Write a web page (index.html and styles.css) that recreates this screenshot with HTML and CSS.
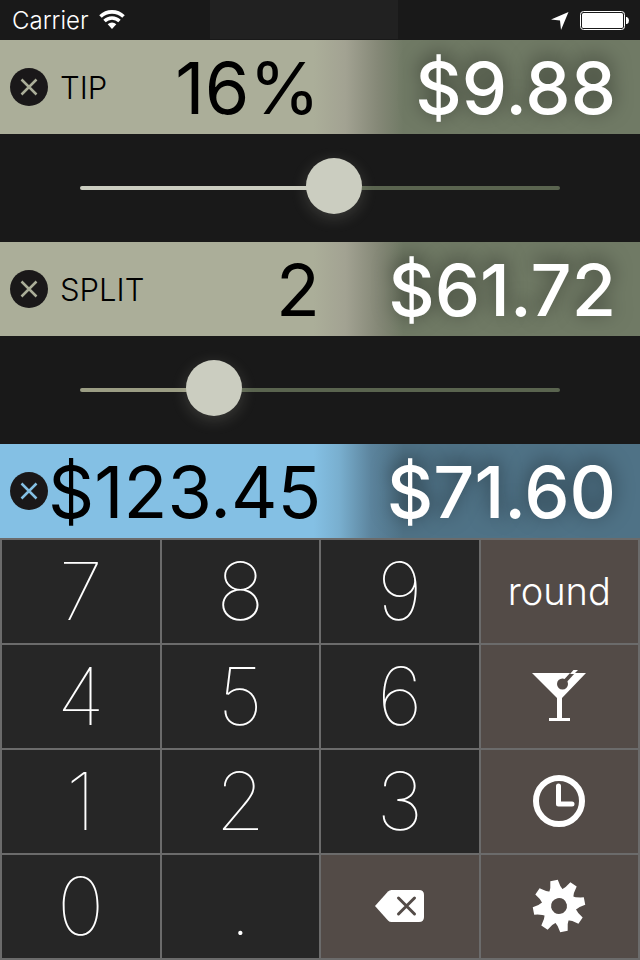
FILE: index.html
```
<!DOCTYPE html>
<html lang="en">
<head>
<meta charset="utf-8">
<meta name="viewport" content="width=device-width, initial-scale=1">
<title>Tip Calculator</title>
<link rel="stylesheet" href="styles.css">
</head>
<body>

<header class="status">
	<div class="carrier">
		<span>Carrier</span>
		<svg width="26" height="20" viewBox="0 0 26 20">
			<path d="M1.5 6.500 A16.500 16.500 0 0 1 24.500 6.500" fill="none" stroke="#fff" stroke-width="3.600"/>
			<path d="M5.500 11 A10.700 10.700 0 0 1 20.500 11" fill="none" stroke="#fff" stroke-width="3.400"/>
			<path d="M8.700 14.200 A6.200 6.200 0 0 1 17.300 14.200 L13 19 Z" fill="#fff"/>
		</svg>
	</div>
	<div class="notch"></div>
	<div class="indicators">
		<svg width="20" height="20" viewBox="0 0 20 20">
			<path d="M18.500 2 L11 20 L10 10.500 L1 9.500 Z" fill="#fff"/>
		</svg>
		<svg width="50" height="20" viewBox="0 0 50 20">
			<rect x="0.500" y="1.500" width="44" height="18" rx="3" fill="none" stroke="#fff"/>
			<rect x="2" y="3" width="41" height="15" rx="1.500" fill="#fff"/>
			<path d="M46 7 h1 q2 1 2 3.500 t-2 3.500 h-1 Z" fill="#fff"/>
		</svg>
	</div>
</header>

<main>
	<section class="row">
		<div class="entry">
			<button class="clear" aria-label="Clear tip"><svg width="38" height="38" viewBox="0 0 38 38"><path d="M11.500 11.500 L26.500 26.500 M26.500 11.500 L11.500 26.500"/></svg></button>
			<label for="tip">TIP</label>
			<output id="tipValue" class="value">16%</output>
		</div>
		<output class="total">$9.88</output>
	</section>
	<div class="slider">
		<input type="range" id="tip" class="bright" min="0" max="30" value="16" style="--fill: 53%">
	</div>

	<section class="row">
		<div class="entry">
			<button class="clear" aria-label="Clear split"><svg width="38" height="38" viewBox="0 0 38 38"><path d="M11.500 11.500 L26.500 26.500 M26.500 11.500 L11.500 26.500"/></svg></button>
			<label for="split">SPLIT</label>
			<output id="splitValue" class="value">2</output>
		</div>
		<output class="total">$61.72</output>
	</section>
	<div class="slider">
		<input type="range" id="split" min="1" max="5" value="2" style="--fill: 25%">
	</div>

	<section class="row active">
		<div class="entry">
			<button class="clear" aria-label="Clear bill"><svg width="38" height="38" viewBox="0 0 38 38"><path d="M11.500 11.500 L26.500 26.500 M26.500 11.500 L11.500 26.500"/></svg></button>
			<output class="value">$123.45</output>
		</div>
		<output class="total">$71.60</output>
	</section>
</main>

<div class="keypad">
	<button>7</button>
	<button>8</button>
	<button>9</button>
	<button class="tool round">round</button>

	<button>4</button>
	<button>5</button>
	<button>6</button>
	<button class="tool" aria-label="Drinks">
		<svg width="56" height="56" viewBox="0 0 56 56">
			<path d="M1 5 H55 L31 30 V50 H39 V53 H18 V50 H26 V30 Z" fill="#fff"/>
			<path d="M31.500 16 L42 4.500" stroke="#534b47" stroke-width="3.600"/>
			<circle cx="31.500" cy="16" r="5.500" fill="#534b47"/>
			<path d="M39 6 L42.500 2 H47 L43 6 Z" fill="#fff"/>
		</svg>
	</button>

	<button>1</button>
	<button>2</button>
	<button>3</button>
	<button class="tool" aria-label="History">
		<svg width="56" height="56" viewBox="0 0 56 56">
			<circle cx="28" cy="28" r="23" fill="none" stroke="#fff" stroke-width="6"/>
			<path d="M27.500 13 V31 H41" fill="none" stroke="#fff" stroke-width="5" stroke-linecap="round" stroke-linejoin="round"/>
		</svg>
	</button>

	<button>0</button>
	<button>.</button>
	<button class="tool" aria-label="Delete">
		<svg width="52" height="34" viewBox="0 0 52 34">
			<path d="M1 17 L14 2.500 Q15.500 1 17.500 1 H45 Q50 1 50 6 V28 Q50 33 45 33 H17.500 Q15.500 33 14 31.500 Z" fill="#fff"/>
			<path d="M24.500 9 L40.500 25 M40.500 9 L24.500 25" stroke="#534b47" stroke-width="3" stroke-linecap="round"/>
		</svg>
	</button>
	<button class="tool" aria-label="Settings">
		<svg width="56" height="56" viewBox="0 0 56 56">
			<g transform="translate(28 28) rotate(-11)" fill="#fff">
				<circle r="12.500" fill="none" stroke="#fff" stroke-width="9"/>
				<path id="tooth" d="M-7.500 -14 Q-4.500 -19 -3.800 -26 H3.800 Q4.500 -19 7.500 -14 Z"/>
				<use href="#tooth" transform="rotate(45)"/>
				<use href="#tooth" transform="rotate(90)"/>
				<use href="#tooth" transform="rotate(135)"/>
				<use href="#tooth" transform="rotate(180)"/>
				<use href="#tooth" transform="rotate(225)"/>
				<use href="#tooth" transform="rotate(270)"/>
				<use href="#tooth" transform="rotate(315)"/>
			</g>
		</svg>
	</button>
</div>

</body>
</html>
```
FILE: styles.css
```
* {
	box-sizing: border-box;
}

body {
	margin: 0;
	min-height: 100vh;
	display: flex;
	flex-direction: column;
	background-color: #191919;
	font-family: Inter, "Liberation Sans", sans-serif;
}

button {
	border: none;
	padding: 0;
	cursor: pointer;
}

svg {
	display: block;
}

/* status bar */
.status {
	display: flex;
	height: 40px;
	color: #fff;
	font-size: 24px;
	font-weight: 300;
}

.carrier, .indicators {
	flex: 1;
	display: flex;
	align-items: center;
	gap: 10px;
	padding: 0 12px;
}

.indicators {
	justify-content: flex-end;
	padding-right: 10px;
}

.notch {
	width: 188px;
	height: 39px;
	margin-right: 34px;
	background-color: #212121;
}

/* value rows */
.row {
	display: flex;
	height: 94px;
	overflow: hidden;
	background: linear-gradient(to right, #abae99 49%, #a2a292 54%, #858877 59%, #707a65 63%);
}

.row.active {
	background: linear-gradient(to right, #84c0e4 49%, #79afcf 53%, #5c849d 58%, #4f7286 63%);
}

.entry, .total {
	width: 50%;
	display: flex;
	align-items: center;
}

.entry {
	padding-left: 10px;
}

.entry label {
	margin-left: 12px;
	font-size: 31px;
	font-weight: 300;
}

.value {
	margin-left: auto;
	font-size: 72px;
}

.total {
	justify-content: flex-end;
	padding-right: 24px;
	color: #fff;
	font-size: 72px;
	font-weight: 500;
	text-shadow: 0 -4px 20px rgba(0, 0, 0, 0.5);
}

.clear {
	flex: none;
	width: 38px;
	height: 38px;
	border-radius: 50%;
	background-color: #1a1819;
}

.clear path {
	stroke: #abae99;
	stroke-width: 2.500;
}

.active .clear path {
	stroke: #84c0e4;
}

/* sliders */
.slider {
	height: 108px;
	padding: 0 80px;
	display: flex;
	align-items: center;
}

.slider input {
	-webkit-appearance: none;
	appearance: none;
	width: 100%;
	height: 4px;
	margin: 0;
	border-radius: 2px;
	background: linear-gradient(to right, #9b9d84 var(--fill), #5a644f var(--fill));
}

.slider .bright {
	background: linear-gradient(to right, #cbcdc0 var(--fill), #5a644f var(--fill));
}

.slider input::-webkit-slider-runnable-track {
	height: 4px;
}

.slider input::-webkit-slider-thumb {
	-webkit-appearance: none;
	width: 56px;
	height: 56px;
	margin-top: -28px;
	border-radius: 50%;
	background-color: #cbcdc0;
	box-shadow: 0 4px 16px rgba(203, 205, 192, 0.2);
}

/* keypad */
.keypad {
	flex: 1;
	display: grid;
	grid-template-columns: repeat(4, 1fr);
	grid-auto-rows: 1fr;
	gap: 2px;
	padding: 2px;
	background-color: #6b6b6b;
}

.keypad button {
	display: flex;
	align-items: center;
	justify-content: center;
	padding-bottom: 2px;
	background-color: #262626;
	color: #fff;
	font-family: inherit;
	font-size: 80px;
	line-height: 80px;
	font-weight: 100;
}

.keypad .tool {
	background-color: #534b47;
}

.keypad .round {
	font-size: 38px;
	font-weight: 300;
}
```
